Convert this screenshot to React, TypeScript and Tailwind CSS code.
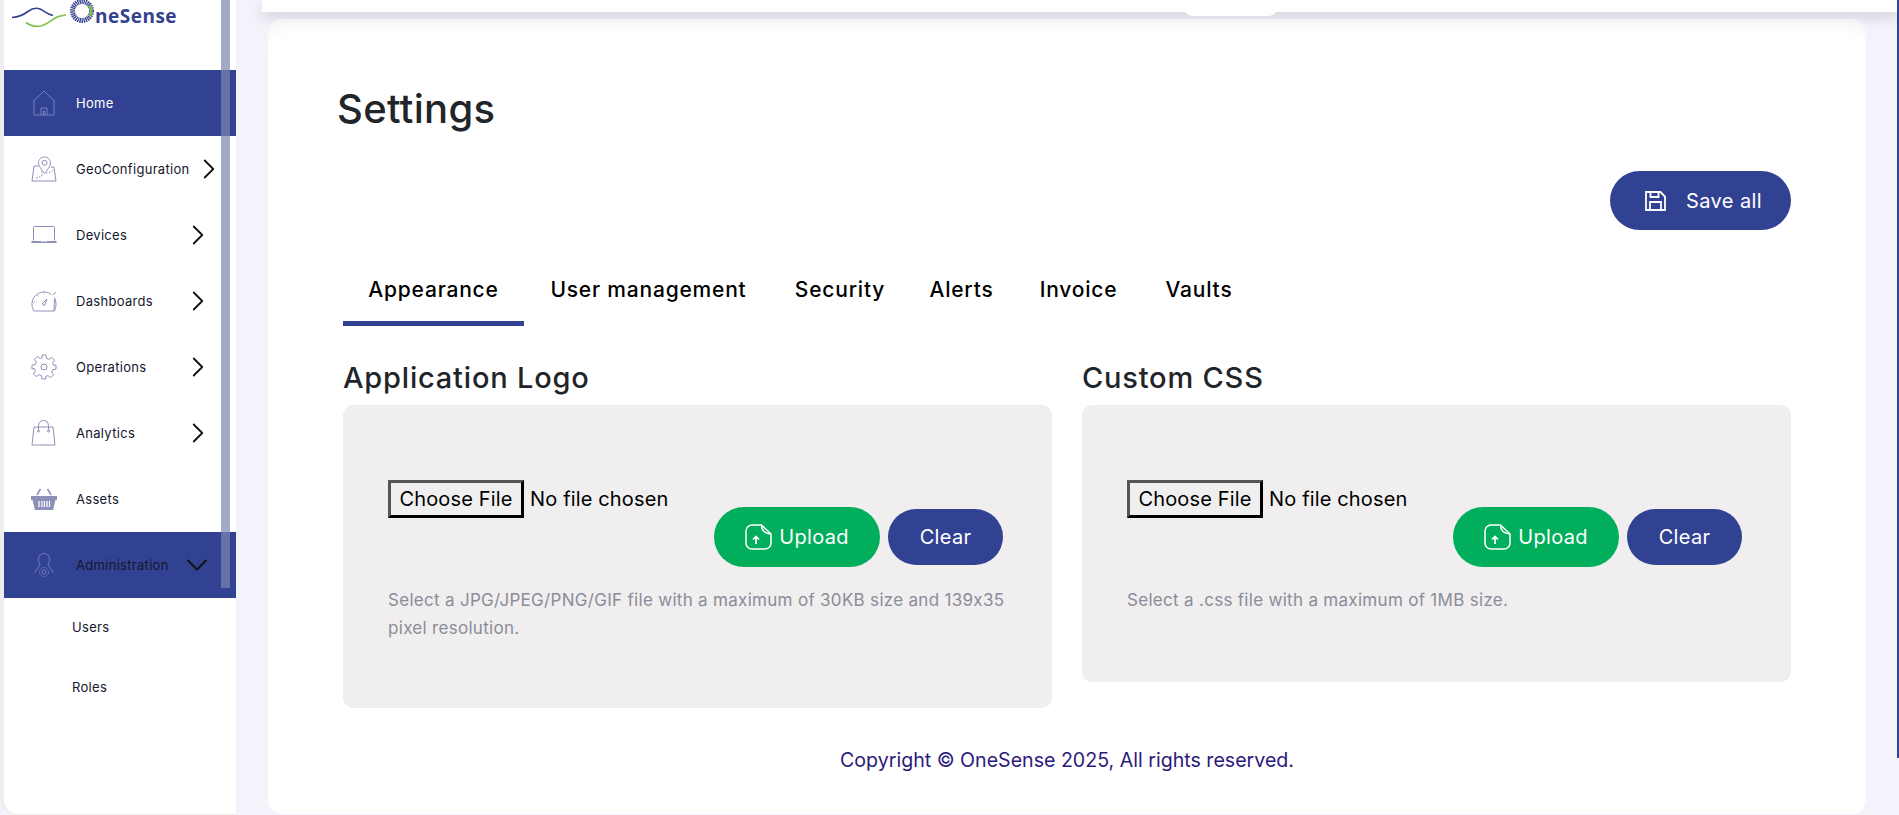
import { ChevronDown, ChevronRight } from "lucide-react";
import type { ReactNode } from "react";

const iconColor = "#8d90b8";

function HomeIcon() {
  return (
    <svg width="24" height="26" viewBox="0 0 24 26" fill="none" stroke="#7480b8" strokeWidth="1">
      <path d="M1 11.500 12 1l11 10.500M2 10.500V25h20V10.500" />
      <path d="M9 25v-7h6v7M11.500 25v-4h1.500v4" />
    </svg>
  );
}

function GeoIcon() {
  return (
    <svg width="26" height="26" viewBox="0 0 26 26" fill="none" stroke={iconColor} strokeWidth="1">
      <path d="M13.500 1c-3.400 0-6 2.600-6 5.800 0 3.500 3.500 7.500 6 10.700 2.500-3.200 6-7.200 6-10.700C19.500 3.600 16.900 1 13.500 1Z" />
      <circle cx="13.500" cy="6.800" r="2.500" />
      <path d="M7.500 10H3L1 25h24l-2-14h-3" />
      <path d="M5 22c3-1 5-1 6-3s-1-3 0-4M15 17c3 0 6-1 7-3" strokeDasharray="1.500 1.500" />
    </svg>
  );
}

function LaptopIcon() {
  return (
    <svg width="26" height="18" viewBox="0 0 26 18" fill="none">
      <path d="M2.500 14.500V1.500a1 1 0 0 1 1-1h19a1 1 0 0 1 1 1v13" stroke={iconColor} />
      <rect x="0.500" y="15" width="25" height="2" fill={iconColor} />
      <rect x="10" y="15" width="6" height="1" fill="#c9cbe0" />
    </svg>
  );
}

function GaugeIcon() {
  return (
    <svg width="26" height="22" viewBox="0 0 26 22" fill="none" stroke={iconColor} strokeWidth="1">
      <path d="M3 21C1.500 19 1 16.500 1 14 1 7.400 6.400 2 13 2c3 0 5.500 1 7.500 2.700M23.500 8c1 1.800 1.500 3.900 1.500 6 0 2.500-.5 5-2 7Z" />
      <path d="M3 21h20M22 5l3-3" />
      <path d="M11 14l5-5-2.500 6.500Z" />
      <path d="M13 2v2.500M6 5l1.500 2M3 12h2.500" strokeDasharray="1 1" />
    </svg>
  );
}

function GearIcon() {
  return (
    <svg width="26" height="26" viewBox="0 0 26 26" fill="none" stroke={iconColor} strokeWidth="1">
      <path d="M11 1h4l.6 3.400 2.300 1 2.900-2 2.800 2.800-2 2.900 1 2.300L25 11v4l-3.400.6-1 2.300 2 2.900-2.800 2.800-2.900-2-2.300 1L15 25h-4l-.6-3.400-2.300-1-2.900 2-2.800-2.800 2-2.900-1-2.300L1 15v-4l3.400-.6 1-2.300-2-2.900 2.800-2.800 2.900 2 2.300-1Z" strokeLinejoin="round" />
      <circle cx="13" cy="13" r="3" />
    </svg>
  );
}

function BagIcon() {
  return (
    <svg width="25" height="26" viewBox="0 0 25 26" fill="none" stroke={iconColor} strokeWidth="1">
      <path d="M3 7h19l2 18H1Z" />
      <path d="M7.500 10V5.500a5 5 0 0 1 10 0V10" />
      <circle cx="7.500" cy="11" r="1" />
      <circle cx="17.500" cy="11" r="1" />
    </svg>
  );
}

function BasketIcon() {
  return (
    <svg width="26" height="24" viewBox="0 0 26 24">
      <path d="M6 8l3.500-6M20 8l-3.500-6" stroke={iconColor} strokeWidth="1.500" fill="none" />
      <path d="M0 9h26v4h-1.500L22 23H4L1.500 13H0Z" fill={iconColor} />
      <path d="M8 14v6M11 14v6M13.500 14v6M16 14v6M18.500 14v6" stroke="#fff" strokeWidth="1.200" />
    </svg>
  );
}

function AdminIcon() {
  return (
    <svg width="20" height="26" viewBox="0 0 20 26" fill="none" stroke="#6f7cb5" strokeWidth="1">
      <path d="M6 13c0 2-5 4-5 8M14 13c0 2 5 4 5 8M6 13c-1-2-1.500-4-1.500-6a5.500 5.500 0 0 1 11 0c0 2-.5 4-1.500 6" />
      <circle cx="10" cy="20" r="4.500" strokeDasharray="2 1" />
      <circle cx="10" cy="20" r="2" />
    </svg>
  );
}

function Logo() {
  return (
    <div className="flex h-[70px] items-start pl-2">
      <svg width="56" height="28" viewBox="0 0 56 28" fill="none" className="shrink-0">
        <path d="M0 17.500C6 17 10 16 16 11.500 20 8.500 24 7.500 28 9c4 1.500 6 5 13 6.500" stroke="#33418f" strokeWidth="1.600" />
        <path d="M14 22.500c5 3.500 10 4.500 15 3.500 6-1.500 10-5.500 15-8.500 3-1.500 6-2 10-2.500" stroke="#7fbd4f" strokeWidth="1.600" />
      </svg>
      <svg width="26" height="24" viewBox="0 0 26 24" fill="none" className="ml-[2px] shrink-0">
        <circle cx="12" cy="11" r="9.500" stroke="#33418f" strokeWidth="5" strokeDasharray="1.300 .7" />
        <path d="M19 5.500a9.500 9.500 0 0 1 1 10" stroke="#7fbd4f" strokeWidth="3" />
      </svg>
      <span className="-ml-px pt-[3px] font-['Open_Sans',sans-serif] text-[19px] leading-[26px] font-bold tracking-[0.5px] text-[#33418f]">neSense</span>
    </div>
  );
}

type NavRowProps = {
  icon: ReactNode;
  label: string;
  active?: boolean;
  dark?: boolean;
  chevron?: "right" | "down" | "geo";
};

function NavRow({ icon, label, active, dark, chevron }: NavRowProps) {
  return (
    <div className={`flex h-[66px] items-center text-[13px] tracking-[0.3px] ${active ? "bg-[#324293]" : ""} ${active && !dark ? "text-white" : "text-[#14172c]"}`}>
      <div className="flex w-[72px] shrink-0 justify-center pl-[7px]">{icon}</div>
      <span className="pt-[2px] whitespace-nowrap">{label}</span>
      {chevron === "geo" && <ChevronRight className="ml-[2px] h-[34px] w-[34px] shrink-0 text-[#111]" strokeWidth={1.300} />}
      {chevron === "right" && <ChevronRight className="absolute left-[177px] h-[34px] w-[34px] text-[#111]" strokeWidth={1.300} />}
      {chevron === "down" && <ChevronDown className="absolute left-[175px] h-[36px] w-[36px] text-[#111]" strokeWidth={1.300} />}
    </div>
  );
}

function Sidebar() {
  return (
    <aside className="relative w-[236px] shrink-0 overflow-hidden rounded-bl-[16px] border-b border-l-4 border-[#eeeeee] bg-white">
      <Logo />
      <nav>
        <NavRow icon={<HomeIcon />} label="Home" active />
        <NavRow icon={<GeoIcon />} label="GeoConfiguration" chevron="geo" />
        <NavRow icon={<LaptopIcon />} label="Devices" chevron="right" />
        <NavRow icon={<GaugeIcon />} label="Dashboards" chevron="right" />
        <NavRow icon={<GearIcon />} label="Operations" chevron="right" />
        <NavRow icon={<BagIcon />} label="Analytics" chevron="right" />
        <NavRow icon={<BasketIcon />} label="Assets" />
        <NavRow icon={<AdminIcon />} label="Administration" active dark chevron="down" />
        <div className="flex h-[60px] items-center pl-[68px] text-[13px] tracking-[0.3px] text-[#14172c]">Users</div>
        <div className="flex h-[60px] items-center pl-[68px] text-[13px] tracking-[0.3px] text-[#14172c]">Roles</div>
      </nav>
      <div className="absolute top-0 left-[217px] h-[588px] w-[9px] bg-[#7c86b0]/70" />
    </aside>
  );
}

function UploadIcon() {
  return (
    <svg width="27" height="26" viewBox="0 0 27 26" fill="none" stroke="#fff" strokeWidth="1.500">
      <path d="M7 1h9.500L26 10v9a6 6 0 0 1-6 6H7a6 6 0 0 1-6-6V7a6 6 0 0 1 6-6Z" strokeLinejoin="round" />
      <path d="M16.500 1c0 5.500 3 8.500 9.500 9" />
      <path d="M11 20v-7M8 15.500l3-3 3 3" strokeWidth="1.700" />
    </svg>
  );
}

function SaveIcon() {
  return (
    <svg width="21" height="20" viewBox="0 0 21 20" fill="none" stroke="#fff" strokeWidth="1.800">
      <path d="M1 1h14.500L20 5.500V19H1Z" />
      <path d="M5.500 1v5h8V1M5 19v-8h11v8" />
    </svg>
  );
}

function UploadPanel({ title, help, height }: { title: string; help: ReactNode; height: string }) {
  return (
    <section>
      <h2 className="mb-[6px] h-[42px] text-[29px] leading-[42px] font-medium tracking-[0.8px] text-[#212529]">{title}</h2>
      <div className={`rounded-[10px] bg-[#f0eeef] pt-[75px] pr-[49px] pl-[45px] ${height}`}>
        <div className="flex justify-between">
          <input
            type="file"
            className="h-[38px] w-[290px] self-start text-[20px] tracking-[0.15px] text-black file:mr-[6px] file:h-[38px] file:w-[136px] file:border-[3px] file:border-t-[#555] file:border-r-black file:border-b-black file:border-l-[#555] file:bg-[#efefef] file:text-[20px] file:tracking-[0.15px] file:text-black"
          />
          <div className="mt-[27px] flex items-center gap-2">
            <button className="flex h-[60px] w-[166px] items-center justify-center gap-[7px] rounded-full bg-[#00ae5b] text-[20px] tracking-[0.3px] text-white">
              <UploadIcon />
              Upload
            </button>
            <button className="h-[56px] w-[115px] rounded-full bg-[#324293] text-[20px] tracking-[0.3px] text-white">Clear</button>
          </div>
        </div>
        <p className="mt-[19px] -mr-[22px] text-[17px] leading-[28px] tracking-[0.3px] text-[#8a8d99] [font-feature-settings:'calt'_0]">{help}</p>
      </div>
    </section>
  );
}

const tabs = [
  { label: "Appearance", width: "w-[181px]", active: true },
  { label: "User management", width: "w-[249px]" },
  { label: "Security", width: "w-[134px]" },
  { label: "Alerts", width: "w-[109px]" },
  { label: "Invoice", width: "w-[125px]" },
  { label: "Vaults", width: "w-[116px]" },
];

export default function App() {
  return (
    <div className="relative flex h-[815px] w-full overflow-hidden bg-[#f3f4fb] font-['Inter',sans-serif]">
      <Sidebar />
      <main className="flex min-w-0 flex-1 flex-col">
        <div className="relative ml-[26px] h-[12px] shrink-0 bg-white shadow-[0_6px_14px_rgba(0,0,0,0.14)]">
          <div className="absolute top-0 left-[921px] h-[16px] w-[95px] rounded-b-[10px] bg-white" />
        </div>
        <div className="relative mt-[7px] mr-[33px] mb-[1px] ml-[32px] flex-1 rounded-[14px] bg-white shadow-[inset_0_14px_16px_-10px_rgba(0,0,0,0.07)]">
          <h1 className="pt-[60px] pl-[69px] text-[40px] leading-[60px] font-medium tracking-[0.3px] text-[#212529]">Settings</h1>
          <div className="px-[75px]">
            <div className="mt-[32px] flex justify-end">
              <button className="flex h-[59px] w-[181px] items-center justify-center gap-[20px] rounded-full bg-[#324293] pl-[6px] text-[20px] tracking-[0.4px] text-white">
                <SaveIcon />
                Save all
              </button>
            </div>
            <div className="mt-[30px] flex">
              {tabs.map((tab) => (
                <button
                  key={tab.label}
                  className={`h-[66px] border-b-[5px] pb-[2px] text-[21px] font-medium tracking-[0.8px] text-black ${tab.width} ${tab.active ? "border-[#324293]" : "border-transparent"}`}
                >
                  {tab.label}
                </button>
              ))}
            </div>
            <div className="mt-[31px] grid grid-cols-2 items-start gap-[30px]">
              <UploadPanel
                title="Application Logo"
                height="h-[303px]"
                help="Select a JPG/JPEG/PNG/GIF file with a maximum of 30KB size and 139x35 pixel resolution."
              />
              <UploadPanel title="Custom CSS" height="h-[277px]" help="Select a .css file with a maximum of 1MB size." />
            </div>
            <p className="mt-[37px] text-center text-[19.6px] leading-[30px] text-[#2b1a7c]">Copyright © OneSense 2025, All rights reserved.</p>
          </div>
        </div>
      </main>
      <div className="absolute top-0 right-0 h-[758px] w-[2px] bg-[#324293]" />
    </div>
  );
}
